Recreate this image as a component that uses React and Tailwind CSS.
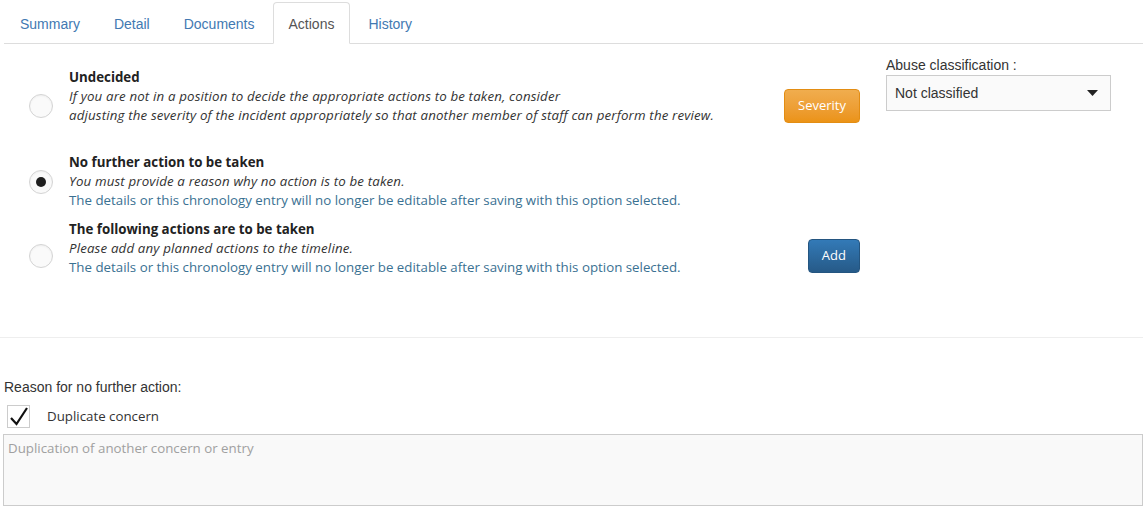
import React from 'react';

const tabs = ['Summary', 'Detail', 'Documents', 'Actions', 'History'];

function Radio({ checked }) {
  return (
    <div className="w-[24px] h-[24px] rounded-full border border-[#d4d4d4] bg-[#fafafa] flex items-center justify-center shadow-[inset_0_1px_2px_rgba(0,0,0,0.05)]">
      {checked && <div className="w-[10px] h-[10px] rounded-full bg-[#1e1e1e]" />}
    </div>
  );
}

function OptionRow({ checked, title, lines, info, button, height }) {
  return (
    <div className={`flex ${height}`}>
      <div className="w-[69px] flex items-center pl-[29px]">
        <Radio checked={checked} />
      </div>
      <div className="flex-1 text-[13.3px] leading-[19px] font-['Open_Sans',sans-serif]">
        <div className="font-bold text-[#222]">{title}</div>
        {lines.map((l, i) => (
          <div key={i} className="italic tracking-[0.15px] text-[#333]">{l}</div>
        ))}
        {info && <div className="text-[#3a7192]">{info}</div>}
      </div>
      <div className="flex items-center">{button}</div>
    </div>
  );
}

export default function App() {
  return (
    <div className="w-[1148px] h-[519px] bg-white overflow-hidden font-['Liberation_Sans',Arial,sans-serif] text-[#333]">
      {/* tabs */}
      <div className="pt-[2px] pl-[4px] pr-[5px]">
        <div className="flex border-b border-[#ddd] h-[42px]">
          {tabs.map((t) => (
            <div
              key={t}
              className={
                t === 'Actions'
                  ? 'mr-[2px] -mb-px px-[15px] pt-[3px] flex items-center text-[14px] text-[#555] bg-white border border-[#ddd] border-b-white rounded-t-[4px]'
                  : 'mr-[2px] px-[15px] pt-[3px] flex items-center text-[14px] text-[#4279b2] border border-transparent'
              }
            >
              {t}
            </div>
          ))}
        </div>
      </div>

      {/* options */}
      <div className="flex h-[293px]">
        <div className="w-[860px] pt-[24px] flex flex-col gap-[9px]">
          <OptionRow
            height="h-[76px]"
            title="Undecided"
            lines={[
              'If you are not in a position to decide the appropriate actions to be taken, consider',
              'adjusting the severity of the incident appropriately so that another member of staff can perform the review.',
            ]}
            button={
              <button className="h-[34px] px-[13px] rounded-[4px] text-white text-[13px] font-['Open_Sans',sans-serif] bg-gradient-to-b from-[#f0ad4e] to-[#eb9316] border border-[#e38d13]">
                Severity
              </button>
            }
          />
          <OptionRow
            checked
            height="h-[58px]"
            title="No further action to be taken"
            lines={['You must provide a reason why no action is to be taken.']}
            info="The details or this chronology entry will no longer be editable after saving with this option selected."
          />
          <OptionRow
            height="h-[72px]"
            title="The following actions are to be taken"
            lines={['Please add any planned actions to the timeline.']}
            info="The details or this chronology entry will no longer be editable after saving with this option selected."
            button={
              <button className="h-[34px] px-[13px] rounded-[4px] text-white text-[13px] font-['Open_Sans',sans-serif] bg-gradient-to-b from-[#337ab7] to-[#265a88] border border-[#245580]">
                Add
              </button>
            }
          />
        </div>
        <div className="ml-[26px] pt-[13px] w-[225px]">
          <div className="text-[14px] leading-[16px] text-[#333]">Abuse classification :</div>
          <div className="mt-[2px] h-[36px] border border-[#ccc] bg-[#fafafa] flex items-center justify-between pl-[8px] pr-[12px] text-[14px] text-[#333]">
            <span>Not classified</span>
            <svg width="11" height="6" viewBox="0 0 11 6">
              <path d="M0 0h11L5.5 6z" fill="#222" />
            </svg>
          </div>
        </div>
      </div>

      {/* divider */}
      <div className="mr-[5px] border-t border-[#eee]" />

      {/* reason */}
      <div className="pl-[4px] pr-[5px] pt-[41px]">
        <div className="text-[14px] leading-[16px] text-[#333]">Reason for no further action:</div>
        <div className="mt-[10px] flex items-center">
          <div className="ml-[3px] w-[23px] h-[23px] border border-[#ccc] bg-white flex items-center justify-center">
            <svg width="20" height="20" viewBox="0 0 20 20">
              <path d="M2 11l5.5 6L18 1" fill="none" stroke="#111" strokeWidth="2.2" />
            </svg>
          </div>
          <span className="ml-[17px] text-[13.3px] font-['Open_Sans',sans-serif] text-[#333]">Duplicate concern</span>
        </div>
        <div className="mt-[6px] -ml-[1px] h-[72px] border border-[#ccc] bg-[#f9f9f9] px-[4px] pt-[4px] text-[13.3px] leading-[19px] font-['Open_Sans',sans-serif] text-[#a0a0a0]">
          Duplication of another concern or entry
        </div>
      </div>
    </div>
  );
}
